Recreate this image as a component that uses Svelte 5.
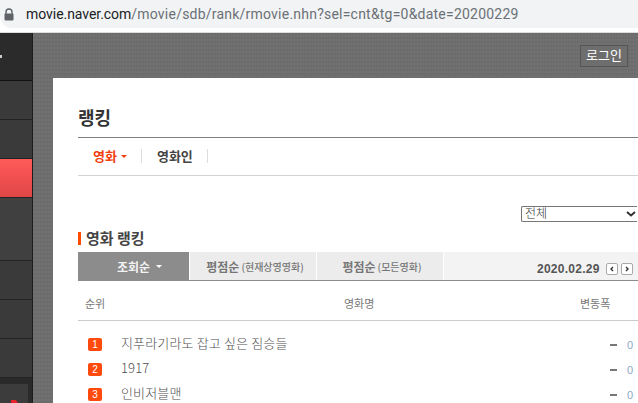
<script>
  const rows = [
    { rank: 1, title: '지푸라기라도 잡고 싶은 짐승들' },
    { rank: 2, title: '1917' },
    { rank: 3, title: '인비저블맨' },
  ];
  const navRows = ['plain', 'plain', 'active', 'tall', 'plain', 'plain', 'plain'];
</script>

<div class="addressbar">
  <svg class="lock" width="10" height="13" viewBox="0 0 10 13">
    <path d="M2 6V4a3 3 0 0 1 6 0v2" fill="none" stroke="#5f6368" stroke-width="1.4" />
    <rect x="0.5" y="5.5" width="9" height="7" rx="1" fill="#5f6368" />
  </svg>
  <span class="url"><span class="host">movie.naver.com</span>/movie/sdb/rank/rmovie.nhn?sel=cnt&amp;tg=0&amp;date=20200229</span>
</div>

<div class="page">
  <aside class="sidebar">
    <div class="nav-head"><i></i></div>
    {#each navRows as row}
      <div class="nav-row" class:active={row === 'active'} class:tall={row === 'tall'}></div>
    {/each}
    <div class="nav-foot"><div class="banner"><i></i></div></div>
  </aside>

  <main class="stage">
    <div class="topbar"><span class="login">로그인</span></div>
    <div class="card">
      <h1>랭킹</h1>
      <nav class="tabs">
        <span class="tab on">영화<i></i></span>
        <span class="tab">영화인</span>
      </nav>
      <div class="filter">
        <div class="select">
          <span>전체</span>
          <svg width="10" height="6" viewBox="0 0 10 6"><path d="m1 1 4 3.5L9 1" fill="none" stroke="#333" stroke-width="2" /></svg>
        </div>
      </div>
      <h2>영화 랭킹</h2>
      <div class="sort">
        <span class="sort-tab on">조회순<i></i></span>
        <span class="sort-tab">평점순<small>(현재상영영화)</small></span>
        <span class="sort-tab">평점순<small>(모든영화)</small></span>
        <div class="date">
          <b>2020.02.29</b>
          <span class="arrow">
            <svg width="6" height="6" viewBox="0 0 6 6"><path d="M4 1 2 3l2 2" fill="none" stroke="#333" stroke-width="1.4" /></svg>
          </span>
          <span class="arrow">
            <svg width="6" height="6" viewBox="0 0 6 6"><path d="m2 1 2 2-2 2" fill="none" stroke="#333" stroke-width="1.4" /></svg>
          </span>
        </div>
      </div>
      <div class="head">
        <span class="c-rank">순위</span>
        <span class="c-title">영화명</span>
        <span class="c-change">변동폭</span>
      </div>
      <ul>
        {#each rows as row}
          <li>
            <span class="badge">{row.rank}</span>
            <span class="title">{row.title}</span>
            <span class="dash"></span>
            <span class="zero">0</span>
          </li>
        {/each}
      </ul>
    </div>
  </main>
</div>

<style>
  :global(body) {
    margin: 0;
    overflow: hidden;
    background: #fff;
    font-family: "Noto Sans CJK KR", "Liberation Sans", sans-serif;
  }
  .addressbar {
    display: flex;
    align-items: center;
    height: 28px;
    width: 638px;
    background: #f1f3f4;
    border-radius: 0 0 0 12px;
    box-sizing: border-box;
    padding-left: 4px;
  }
  .lock { margin-right: 12px; }
  .url {
    font: 14px Roboto, "Open Sans", sans-serif;
    color: #6b7076;
    white-space: nowrap;
    letter-spacing: 0.22px;
  }
  .host { color: #202124; letter-spacing: -0.05px; }
  .page {
    display: flex;
    margin-top: 4px;
    border-top: 1px solid #dcdcdc;
    height: 370px;
    overflow: hidden;
    background:
      repeating-linear-gradient(90deg, rgba(255, 255, 255, 0.02) 0 1px, transparent 1px 3px),
      repeating-linear-gradient(0deg, #6b6b6b 0 2px, #6f6f6f 2px 4px);
  }
  .sidebar {
    flex: 0 0 33px;
    box-sizing: border-box;
    border-right: 1px solid #1c1c1c;
    background: #2a2a2a;
  }
  .nav-head {
    position: relative;
    height: 48px;
    background: #2b2b2b;
    border-bottom: 1px solid #111;
    box-sizing: border-box;
  }
  .nav-head i {
    position: absolute;
    left: 0;
    top: 22px;
    width: 2px;
    height: 3px;
    background: #ccc;
  }
  .nav-row {
    height: 39px;
    box-sizing: border-box;
    background: #3a3a3a;
    border-bottom: 1px solid #232323;
  }
  .nav-row.tall { height: 63px; background: #404040; }
  .nav-row.active { background: linear-gradient(#ff5a5a, #e04646); border-bottom-color: #222; }
  .nav-foot { padding: 6px 4px 0 0; }
  .banner { position: relative; height: 30px; background: #3c3c3c; }
  .banner i {
    position: absolute;
    left: 11px;
    top: 16px;
    border: 3px solid transparent;
    border-left: 5px solid #e3242b;
    border-top: 0;
    border-bottom: 5px solid #e3242b;
  }
  .stage { flex: 1; min-width: 0; padding-left: 20px; }
  .topbar {
    display: flex;
    justify-content: flex-end;
    height: 45px;
    padding-right: 10px;
    padding-top: 12px;
    box-sizing: border-box;
  }
  .login {
    height: 22px;
    width: 48px;
    box-sizing: border-box;
    border: 1px solid #555;
    background: #6e6e6e;
    color: #fff;
    font-size: 13px;
    line-height: 17px;
    text-align: center;
  }
  .card {
    background: #fff;
    height: 330px;
    padding-left: 25px;
    width: 600px;
    box-sizing: border-box;
  }
  h1 {
    margin: 0;
    padding-top: 26px;
    height: 60px;
    box-sizing: border-box;
    border-bottom: 1px solid #808080;
    font-size: 18px;
    line-height: 27px;
    font-weight: 700;
    color: #333;
  }
  .tabs {
    display: flex;
    align-items: center;
    height: 38px;
    padding-bottom: 2px;
    box-sizing: border-box;
    border-bottom: 1px solid #d3d3d3;
  }
  .tab {
    display: flex;
    align-items: center;
    height: 14px;
    font-size: 13px;
    font-weight: 700;
    color: #444;
    padding: 0 14px 0 15px;
    border-right: 1px solid #ddd;
  }
  .tab.on { color: #f0400f; }
  .tab.on i {
    margin-left: 4px;
    margin-top: 2px;
    border: 3px solid transparent;
    border-top: 3px solid #f0400f;
    border-bottom: 0;
  }
  .filter { display: flex; padding-left: 443px; padding-top: 30px; height: 16px; }
  .select {
    display: flex;
    align-items: center;
    justify-content: space-between;
    flex: none;
    width: 116px;
    height: 16px;
    padding: 0 1px 2px 3px;
    box-sizing: border-box;
    font-size: 12px;
    line-height: 12px;
    font-weight: 300;
    color: #333;
    background: #fff;
    border: 1px solid #767676;
    border-right: 0;
    border-radius: 2px 0 0 2px;
  }
  .select svg { margin-top: 2px; }
  h2 {
    margin: 10px 0 0;
    padding-left: 5px;
    border-left: 3px solid #ff4a00;
    height: 13px;
    font-size: 15px;
    line-height: 12px;
    font-weight: 700;
    color: #444;
  }
  .sort {
    display: flex;
    height: 29px;
    margin-top: 7px;
    background: #f3f3f3;
    border-bottom: 1px solid #8c8c8c;
    box-sizing: border-box;
  }
  .sort-tab {
    display: flex;
    align-items: center;
    justify-content: center;
    flex: 0 0 127px;
    padding-left: 4px;
    background: #ececec;
    border-right: 1px solid #fff;
    font-size: 12px;
    font-weight: 700;
    color: #777;
    box-sizing: border-box;
  }
  .sort-tab small { font-size: 10px; font-weight: 500; margin-left: 2px; }
  .sort-tab.on { flex: 0 0 112px; background: #8c8c8c; color: #f3f3f3; padding-left: 12px; }
  .sort-tab.on i {
    margin-left: 6px;
    border: 3px solid transparent;
    border-top: 3px solid #fff;
    border-bottom: 0;
  }
  .date {
    display: flex;
    align-items: center;
    margin-left: 93px;
    padding-top: 5px;
    gap: 3px;
  }
  .date b {
    font: 700 12px "Liberation Sans", sans-serif;
    letter-spacing: 0.25px;
    color: #555;
    margin-right: 3px;
  }
  .arrow {
    display: flex;
    align-items: center;
    justify-content: center;
    width: 12px;
    height: 12px;
    box-sizing: border-box;
    border: 1px solid #aaa;
    border-radius: 2px;
    background: #fff;
  }
  .head {
    display: flex;
    align-items: center;
    height: 40px;
    padding-top: 4px;
    box-sizing: border-box;
    border-bottom: 1px solid #ccc;
    font-size: 11px;
    color: #777;
  }
  .c-rank { margin-left: 7px; width: 259px; }
  .c-title { width: 236px; }
  ul { list-style: none; margin: 11px 0 0; padding: 0; }
  li { display: flex; align-items: center; height: 25px; }
  .badge {
    margin-left: 10px;
    width: 14px;
    height: 13px;
    border-radius: 2px;
    background: #ff4a0e;
    color: #fff;
    font: 10px/13px "Liberation Sans", sans-serif;
    text-align: center;
  }
  .title {
    margin-left: 19px;
    margin-bottom: 4px;
    width: 489px;
    font-size: 13px;
    font-weight: 300;
    letter-spacing: 0.15px;
    color: #4f4f4f;
  }
  .dash { width: 7px; height: 2px; background: #777; }
  .zero { margin-left: 10px; font: 11px "Liberation Sans", sans-serif; color: #8ba8c8; }
</style>
